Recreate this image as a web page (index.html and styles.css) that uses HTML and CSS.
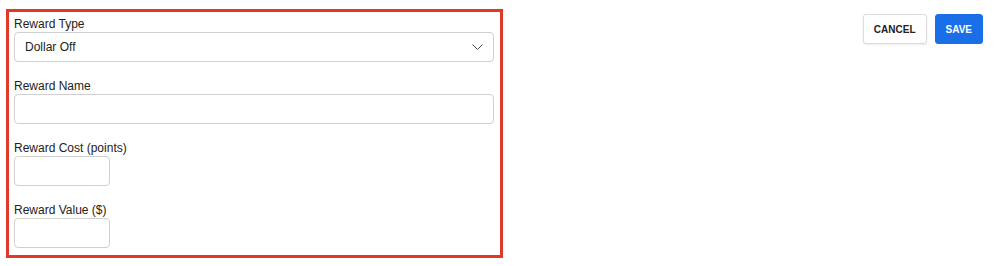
FILE: index.html
```html
<!DOCTYPE html>
<html lang="en">
<head>
    <meta charset="UTF-8">
    <meta name="viewport" content="width=device-width, initial-scale=1.0">
    <title>Edit Reward</title>
    <link rel="stylesheet" href="styles.css">
</head>
<body>
    <div class="page">
        <form class="reward-form" id="rewardForm">
            <div class="field">
                <label for="rewardType">Reward Type</label>
                <div class="select-wrap">
                    <select id="rewardType" name="rewardType">
                        <option value="dollar" selected>Dollar Off</option>
                        <option value="percent">Percent Off</option>
                        <option value="item">Free Item</option>
                    </select>
                    <svg class="chevron" width="11" height="6" viewBox="0 0 11 6">
                        <path d="M0.5 0.5 L5.5 5.5 L10.5 0.5" fill="none" stroke="#444" stroke-width="1"/>
                    </svg>
                </div>
            </div>

            <div class="field">
                <label for="rewardName">Reward Name</label>
                <input type="text" id="rewardName" name="rewardName">
            </div>

            <div class="field">
                <label for="rewardCost">Reward Cost (points)</label>
                <input type="number" id="rewardCost" name="rewardCost" class="short">
            </div>

            <div class="field">
                <label for="rewardValue">Reward Value ($)</label>
                <input type="number" id="rewardValue" name="rewardValue" class="short">
            </div>
        </form>

        <div class="actions">
            <button type="button" class="btn btn-cancel">CANCEL</button>
            <button type="submit" form="rewardForm" class="btn btn-save">SAVE</button>
        </div>
    </div>
</body>
</html>
```

FILE: styles.css
```css
body {
    margin: 0;
    font-family: "Liberation Sans", Arial, sans-serif;
    background-color: #fff;
    color: #222;
}
.page {
    display: flex;
    justify-content: space-between;
    align-items: flex-start;
    padding: 9px 17px 0 6px;
}
.reward-form {
    width: 497px;
    box-sizing: border-box;
    border: 3px solid #e0392a;
    padding: 4px 6px 7px 5px;
}
.field + .field {
    margin-top: 16px;
}
label {
    display: block;
    font-size: 12px;
    line-height: 16px;
    color: #222;
}
.select-wrap {
    position: relative;
}
select, input[type="text"], input[type="number"] {
    display: block;
    width: 100%;
    height: 30px;
    box-sizing: border-box;
    margin: 0;
    border: 1px solid #cfcfcf;
    border-radius: 4px;
    background-color: #fff;
    font-family: inherit;
    font-size: 12px;
    color: #222;
}
select {
    appearance: none;
    -webkit-appearance: none;
    padding: 0 30px 0 10px;
}
input[type="text"], input[type="number"] {
    padding: 0 8px;
}
input[type="number"] {
    -moz-appearance: textfield;
}
input[type="number"]::-webkit-inner-spin-button,
input[type="number"]::-webkit-outer-spin-button {
    -webkit-appearance: none;
    margin: 0;
}
input.short {
    width: 96px;
}
.chevron {
    position: absolute;
    right: 11px;
    top: 12px;
    pointer-events: none;
}
.actions {
    display: flex;
    gap: 8px;
    margin-top: 5px;
}
.btn {
    height: 30px;
    padding: 0 10px;
    border-radius: 3px;
    font-family: inherit;
    font-size: 10px;
    font-weight: bold;
    cursor: pointer;
}
.btn-cancel {
    background-color: #fff;
    color: #222;
    border: 1px solid #dcdcdc;
    box-shadow: 0 1px 2px rgba(0, 0, 0, 0.08);
}
.btn-save {
    background-color: #1a6fe8;
    color: #fff;
    border: 1px solid #1a6fe8;
}
```
